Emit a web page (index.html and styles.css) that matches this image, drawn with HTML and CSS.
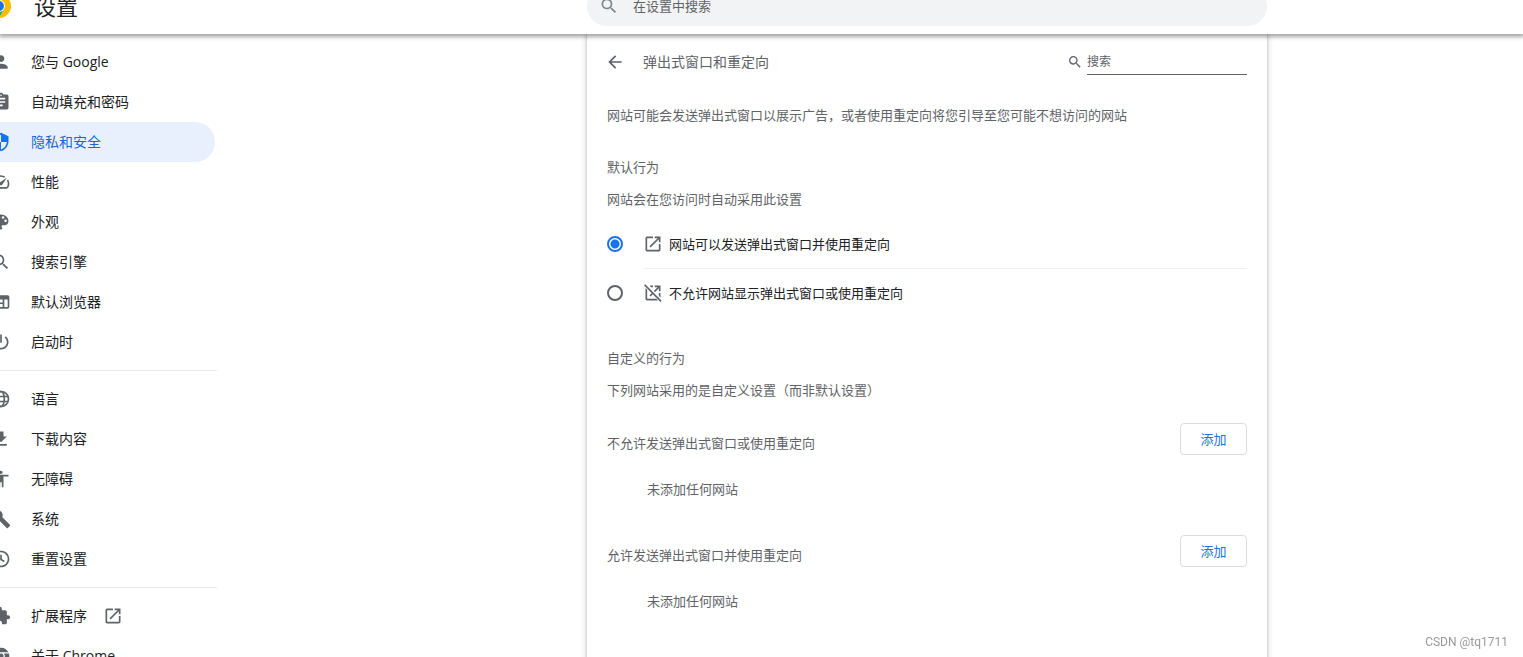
FILE: index.html
```html
<!DOCTYPE html>
<html lang="zh-CN">
<head>
<meta charset="utf-8">
<title>设置</title>
<link rel="stylesheet" href="styles.css">
</head>
<body>
<svg class="sprite" aria-hidden="true">
  <symbol id="search" viewBox="0 0 24 24"><path d="M15.5 14h-.79l-.28-.27A6.471 6.471 0 0 0 16 9.5 6.5 6.5 0 1 0 9.5 16c1.61 0 3.09-.59 4.23-1.57l.27.28v.79l5 4.99L20.49 19l-4.99-5zm-6 0C7.01 14 5 11.99 5 9.5S7.01 5 9.5 5 14 7.01 14 9.5 11.99 14 9.5 14z"/></symbol>
  <symbol id="open" viewBox="0 0 24 24"><path d="M19 19H5V5h7V3H5c-1.11 0-2 .9-2 2v14c0 1.1.89 2 2 2h14c1.1 0 2-.9 2-2v-7h-2v7zM14 3v2h3.59l-9.83 9.83 1.41 1.41L19 6.41V10h2V3h-7z"/></symbol>
</svg>

<header class="toolbar">
  <div class="brand">
    <svg class="logo" viewBox="0 0 24 24" aria-hidden="true">
      <path fill="#ea4335" d="M12 12 1.6 6A12 12 0 0 1 22.4 6z"/>
      <path fill="#fbbc04" d="M12 12V6h10.4A12 12 0 0 1 12 24l5.2-9z"/>
      <path fill="#34a853" d="M12 12l5.2 3L12 24A12 12 0 0 1 1.6 6l5.2 9z"/>
      <circle cx="12" cy="12" r="6" fill="#fff"/>
      <circle cx="12" cy="12" r="5" fill="#1a73e8"/>
    </svg>
    <h1 class="brand-title">设置</h1>
  </div>
  <div class="toolbar-main">
    <label class="search-box">
      <svg class="icon search-box-icon" aria-hidden="true"><use href="#search"/></svg>
      <input class="search-box-input" type="search" placeholder="在设置中搜索" aria-label="在设置中搜索">
    </label>
  </div>
</header>

<div class="layout">
  <nav class="sidebar" aria-label="设置">
    <a class="nav-item" href="#people"><svg class="icon" viewBox="0 0 24 24"><path d="M12 12c2.21 0 4-1.79 4-4s-1.79-4-4-4-4 1.79-4 4 1.79 4 4 4zm0 2c-2.67 0-8 1.34-8 4v2h16v-2c0-2.66-5.33-4-8-4z"/></svg><span>您与 <span class="latin">Google</span></span></a>
    <a class="nav-item" href="#autofill"><svg class="icon" viewBox="0 0 24 24"><path d="M19 3h-4.18C14.4 1.84 13.3 1 12 1s-2.4.84-2.82 2H5c-1.1 0-2 .9-2 2v14c0 1.1.9 2 2 2h14c1.1 0 2-.9 2-2V5c0-1.1-.9-2-2-2zm-7 0c.55 0 1 .45 1 1s-.45 1-1 1-1-.45-1-1 .45-1 1-1zm2 14H7v-2h7v2zm3-4H7v-2h10v2zm0-4H7V7h10v2z"/></svg><span>自动填充和密码</span></a>
    <a class="nav-item selected" href="#privacy" aria-current="page"><svg class="icon" viewBox="0 0 24 24"><path fill-rule="evenodd" d="M12 1L3 5v6c0 5.55 3.84 10.74 9 12 5.16-1.26 9-6.45 9-12V5zM12 3.2V12H5V6.3zM12 12h7c-.5 4.1-3.3 7.8-7 8.900z"/></svg><span>隐私和安全</span></a>
    <a class="nav-item" href="#performance"><svg class="icon" viewBox="0 0 24 24"><path d="M20.38 8.57l-1.23 1.85a8 8 0 0 1-.22 7.58H5.07A8 8 0 0 1 15.58 6.85l1.85-1.23A10 10 0 0 0 3.35 19a2 2 0 0 0 1.72 1h13.85a2 2 0 0 0 1.74-1 10 10 0 0 0-.27-10.44zm-9.79 6.84a2 2 0 0 0 2.83 0l5.66-8.49-8.49 5.66a2 2 0 0 0 0 2.83z"/></svg><span>性能</span></a>
    <a class="nav-item" href="#appearance"><svg class="icon" viewBox="0 0 24 24"><path d="M12 3c-4.97 0-9 4.03-9 9s4.03 9 9 9c.83 0 1.5-.67 1.5-1.5 0-.39-.15-.74-.39-1.01-.23-.26-.38-.61-.38-.99 0-.83.67-1.5 1.5-1.5H16c2.76 0 5-2.24 5-5 0-4.42-4.03-8-9-8zm-5.5 9c-.83 0-1.5-.67-1.5-1.5S5.67 9 6.5 9 8 9.67 8 10.5 7.33 12 6.5 12zm3-4C8.67 8 8 7.33 8 6.5S8.67 5 9.5 5s1.5.67 1.5 1.5S10.33 8 9.5 8zm5 0c-.83 0-1.5-.67-1.5-1.5S13.67 5 14.5 5s1.5.67 1.5 1.5S15.33 8 14.5 8zm3 4c-.83 0-1.5-.67-1.5-1.5S16.67 9 17.5 9s1.5.67 1.5 1.5-.67 1.5-1.5 1.5z"/></svg><span>外观</span></a>
    <a class="nav-item" href="#engine"><svg class="icon"><use href="#search"/></svg><span>搜索引擎</span></a>
    <a class="nav-item" href="#browser"><svg class="icon" viewBox="0 0 24 24"><path fill-rule="evenodd" d="M4 4h16a2 2 0 0 1 2 2v12a2 2 0 0 1-2 2H4a2 2 0 0 1-2-2V6a2 2 0 0 1 2-2zm0 5v3.500h10V9zm0 5.500V18h10v-3.500zM16 9v9h4V9z"/></svg><span>默认浏览器</span></a>
    <a class="nav-item" href="#startup"><svg class="icon" viewBox="0 0 24 24"><path d="M13 3h-2v10h2V3zm4.830 2.170l-1.420 1.420C17.990 7.860 19 9.810 19 12c0 3.870-3.130 7-7 7s-7-3.130-7-7c0-2.190 1.010-4.140 2.580-5.420L6.170 5.170C4.230 6.820 3 9.260 3 12c0 4.970 4.030 9 9 9s9-4.030 9-9c0-2.740-1.230-5.180-3.170-6.830z"/></svg><span>启动时</span></a>
    <hr class="nav-divider">
    <a class="nav-item" href="#languages"><svg class="icon" viewBox="0 0 24 24"><g fill="none" stroke="currentColor" stroke-width="2"><circle cx="12" cy="12" r="9"/><ellipse cx="12" cy="12" rx="4" ry="9"/><path d="M4 9h16M4 15h16"/></g></svg><span>语言</span></a>
    <a class="nav-item" href="#downloads"><svg class="icon" viewBox="0 0 24 24"><path d="M5 20h14v-2H5v2zM19 9h-4V3H9v6H5l7 7 7-7z"/></svg><span>下载内容</span></a>
    <a class="nav-item" href="#a11y"><svg class="icon" viewBox="0 0 24 24"><path d="M12 2c1.1 0 2 .9 2 2s-.9 2-2 2-2-.9-2-2 .9-2 2-2zm9 7h-6v13h-2v-6h-2v6H9V9H3V7h18v2z"/></svg><span>无障碍</span></a>
    <a class="nav-item" href="#system"><svg class="icon" viewBox="0 0 24 24"><path d="M22.7 19l-9.1-9.1c.9-2.3.4-5-1.5-6.900-2-2-5-2.400-7.400-1.300L9 6 6 9 1.600 4.700C.4 7.100.9 10.100 2.900 12.100c1.900 1.900 4.600 2.400 6.900 1.500l9.100 9.100c.4.4 1 .4 1.400 0l2.300-2.300c.5-.4.5-1.100.1-1.400z"/></svg><span>系统</span></a>
    <a class="nav-item" href="#reset"><svg class="icon" viewBox="0 0 24 24"><g fill="none" stroke="currentColor" stroke-width="2"><path d="M5 6.300A9 9 0 1 1 3 12"/><path d="M3 3v5h5M12 7v5.500l4 2.500"/></g></svg><span>重置设置</span></a>
    <hr class="nav-divider">
    <a class="nav-item" href="#extensions"><svg class="icon" viewBox="0 0 24 24"><path d="M20.500 11H19V7c0-1.100-.9-2-2-2h-4V3.500a2.500 2.500 0 0 0-5 0V5H4c-1.100 0-1.990.9-1.990 2v3.800H3.500c1.490 0 2.700 1.210 2.700 2.700s-1.210 2.700-2.700 2.700H2V20c0 1.100.9 2 2 2h3.800v-1.500c0-1.490 1.210-2.700 2.700-2.700s2.700 1.210 2.700 2.700V22H17c1.100 0 2-.9 2-2v-4h1.500a2.500 2.500 0 0 0 0-5z"/></svg><span>扩展程序</span><svg class="icon nav-external"><use href="#open"/></svg></a>
    <a class="nav-item" href="#about"><svg class="icon" viewBox="0 0 24 24"><path d="M12 7.500h8.900A10 10 0 0 0 3.400 6.900l4.200 6.300A4.500 4.500 0 0 1 12 7.500zM21.500 9h-6.200a4.500 4.500 0 0 1 .6 5.300L11.600 22A10 10 0 0 0 21.500 9zM2.700 8.300A10 10 0 0 0 10 21.800l3.200-5.500a4.500 4.500 0 0 1-5.100-2z"/><circle cx="12" cy="12" r="3"/></svg><span>关于 <span class="latin">Chrome</span></span></a>
  </nav>

  <main class="content">
    <section class="card">
      <div class="page-head">
        <button class="back" type="button" aria-label="返回"><svg class="icon" viewBox="0 0 24 24"><path d="M20 11H7.830l5.590-5.590L12 4l-8 8 8 8 1.410-1.410L7.830 13H20v-2z"/></svg></button>
        <h2 class="page-title">弹出式窗口和重定向</h2>
        <label class="page-search">
          <svg class="icon page-search-icon" aria-hidden="true"><use href="#search"/></svg>
          <input class="page-search-input" type="search" placeholder="搜索" aria-label="搜索">
        </label>
      </div>
      <p class="description">网站可能会发送弹出式窗口以展示广告，或者使用重定向将您引导至您可能不想访问的网站</p>

      <h3 class="section-title">默认行为</h3>
      <p class="section-note">网站会在您访问时自动采用此设置</p>
      <div class="options">
        <label class="option">
          <input class="radio" type="radio" name="popups" checked>
          <span class="option-body"><svg class="icon" aria-hidden="true"><use href="#open"/></svg>网站可以发送弹出式窗口并使用重定向</span>
        </label>
        <label class="option">
          <input class="radio" type="radio" name="popups">
          <span class="option-body"><svg class="icon" viewBox="0 0 24 24" aria-hidden="true"><path d="M8 3h4v2H9.500zM14 3h7v7h-2V6.410l-4.600 4.600-1.410-1.410L17.590 5H14zM19 12h2v5.500l-2-2zM3 6l2 2v11h11l2 2H5c-1.100 0-2-.9-2-2zM7.800 14.800l2.900-2.900 1.400 1.400-2.900 2.900z"/><path d="M2.700 1.600L22.400 21.300 21 22.700 1.300 3z"/></svg>不允许网站显示弹出式窗口或使用重定向</span>
        </label>
      </div>

      <h3 class="section-title custom-title">自定义的行为</h3>
      <p class="section-note">下列网站采用的是自定义设置（而非默认设置）</p>

      <div class="site-head"><h4 class="site-title">不允许发送弹出式窗口或使用重定向</h4><button class="add" type="button">添加</button></div>
      <p class="empty">未添加任何网站</p>
      <div class="site-head"><h4 class="site-title">允许发送弹出式窗口并使用重定向</h4><button class="add" type="button">添加</button></div>
      <p class="empty">未添加任何网站</p>
    </section>
  </main>
</div>
<div class="watermark">CSDN @tq1711</div>
</body>
</html>
```
FILE: styles.css
```css
* {
  box-sizing: border-box;
}

html,
body {
  height: 100%;
}

body {
  margin: 0;
  display: flex;
  flex-direction: column;
  overflow: hidden;
  background: #fff;
  color: #202124;
  font: 13px/20px "Noto Sans", "Noto Sans CJK SC", sans-serif;
}

h1, h2, h3, h4, p {
  margin: 0;
  font-size: 13px;
  font-weight: 400;
}

button,
input {
  font: inherit;
}

.sprite {
  position: absolute;
  width: 0;
  height: 0;
}

.icon {
  flex: none;
  width: 20px;
  height: 20px;
  fill: currentColor;
  color: #5f6368;
}

/* Top bar */
.toolbar {
  position: relative;
  z-index: 1;
  flex: none;
  display: grid;
  grid-template-columns: 331px 1fr;
  align-items: center;
  height: 56px;
  margin-top: -22px;
  background: #fff;
  box-shadow: 0 2px 4px 1px rgba(0, 0, 0, .35);
}

.brand {
  display: flex;
  align-items: center;
  gap: 23px;
  margin-left: -13px;
}

.logo {
  width: 24px;
  height: 24px;
}

.brand-title {
  font-size: 22px;
  line-height: 32px;
}

.toolbar-main {
  display: flex;
  justify-content: center;
}

.search-box {
  display: flex;
  align-items: center;
  gap: 14px;
  width: 100%;
  max-width: 680px;
  height: 40px;
  padding: 0 12px;
  border-radius: 20px;
  background: #f1f3f4;
}

.search-box-icon {
  color: #80868b;
}

.search-box-input,
.page-search-input {
  flex: 1;
  min-width: 0;
  padding: 0;
  border: 0;
  outline: 0;
  background: none;
  color: #202124;
}

.search-box-input::placeholder,
.page-search-input::placeholder {
  color: #5f6368;
  opacity: 1;
}

/* Columns */
.layout {
  flex: 1;
  min-height: 0;
  display: grid;
  grid-template-columns: 331px 1fr;
}

.sidebar {
  width: 217px;
  padding-top: 8px;
  font-size: 14px;
}

.nav-item {
  display: flex;
  align-items: center;
  gap: 20px;
  height: 40px;
  margin: 0 2px 0 -32px;
  padding-left: 23px;
  border-radius: 0 20px 20px 0;
  color: #202124;
  text-decoration: none;
}

.latin {
  font-family: "Open Sans", "Noto Sans", sans-serif;
  font-weight: 500;
}

.nav-item.selected {
  background: #e8f0fe;
  color: #1967d2;
}

.nav-item.selected .icon {
  color: #1a73e8;
}

.nav-external {
  margin-left: -4px;
}

.nav-divider {
  height: 1px;
  margin: 8px 0;
  border: 0;
  background: #e8eaed;
}

.content {
  display: flex;
  justify-content: center;
}

.card {
  width: 100%;
  max-width: 680px;
  padding: 8px 20px;
  background: #fff;
  box-shadow: 0 0 2px rgba(60, 64, 67, .3), 0 1px 6px 1px rgba(60, 64, 67, .2);
}

.page-head {
  display: flex;
  align-items: center;
  height: 40px;
}

.back {
  display: flex;
  padding: 0;
  border: 0;
  background: none;
  margin: 0 18px 0 -2px;
}

.page-title {
  flex: 1;
  color: #5f6368;
  font-size: 14px;
}

.page-search {
  display: flex;
  align-items: center;
  gap: 4px;
}

.page-search-icon {
  width: 16px;
  height: 16px;
}

.page-search-input {
  width: 160px;
  height: 26px;
  border-bottom: 1px solid #5f6368;
  border-radius: 0;
  font-size: 12px;
}

.description {
  padding: 23px 0 32px;
  color: #5f6368;
}

.section-title,
.section-note,
.site-title,
.empty {
  color: #5f6368;
}

.section-note {
  margin-top: 12px;
}

.options {
  margin-top: 11px;
}

.option {
  display: flex;
  align-items: center;
  gap: 20px;
  height: 48px;
}

.option + .option {
  height: 49px;
}

.option-body {
  flex: 1;
  display: flex;
  align-items: center;
  gap: 6px;
  height: 100%;
}

.option + .option .option-body {
  border-top: 1px solid #f0f0f1;
}

.radio {
  appearance: none;
  width: 16px;
  height: 16px;
  margin: 0;
  border: 2px solid #5f6368;
  border-radius: 50%;
}

.radio:checked {
  border-color: #1a73e8;
  background: radial-gradient(circle, #1a73e8 4px, transparent 5px);
}

.custom-title {
  margin-top: 31px;
}

.site-head {
  display: flex;
  align-items: center;
  justify-content: space-between;
  height: 48px;
  margin-top: 17px;
}

.site-title {
  padding-top: 4px;
}

.add {
  width: 67px;
  height: 32px;
  margin-bottom: 4px;
  padding: 0;
  border: 1px solid #dadce0;
  border-radius: 4px;
  background: #fff;
  color: #1a73e8;
}

.empty {
  padding: 14px 0 13px 40px;
}

.watermark {
  position: fixed;
  right: 15px;
  bottom: 5px;
  color: #999;
  font: 12px/20px Roboto, sans-serif;
}
```
